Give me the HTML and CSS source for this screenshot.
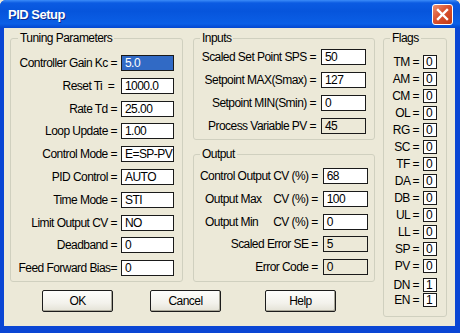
FILE: index.html
```html
<!DOCTYPE html>
<html>
<head>
    <title>PID Setup</title>
    <link rel="stylesheet" href="styles.css">
</head>
<body>
    <div class="window">
        <div class="title-bar">
            <span class="title">PID Setup</span>
            <span class="close-button">
                <svg width="13" height="13" viewBox="0 0 13 13">
                    <path d="M2 2 L11 11 M11 2 L2 11" stroke="#fff" stroke-width="2.4" stroke-linecap="square"/>
                </svg>
            </span>
        </div>
        <div class="client">
            <fieldset class="group tuning">
                <legend>Tuning Parameters</legend>
                <div class="rows">
                    <span class="label">Controller Gain Kc =</span><span class="box selected">5.0</span>
                    <span class="label">Reset Ti  = </span><span class="box">1000.0</span>
                    <span class="label">Rate Td =</span><span class="box">25.00</span>
                    <span class="label">Loop Update =</span><span class="box">1.00</span>
                    <span class="label">Control Mode =</span><span class="box">E=SP-PV</span>
                    <span class="label">PID Control =</span><span class="box">AUTO</span>
                    <span class="label">Time Mode =</span><span class="box">STI</span>
                    <span class="label">Limit Output CV =</span><span class="box">NO</span>
                    <span class="label">Deadband =</span><span class="box">0</span>
                    <span class="label">Feed Forward Bias=</span><span class="box">0</span>
                </div>
            </fieldset>

            <div class="middle">
                <fieldset class="group inputs">
                    <legend>Inputs</legend>
                    <div class="rows">
                        <span class="label">Scaled Set Point SPS =</span><span class="box">50</span>
                        <span class="label">Setpoint MAX(Smax) =</span><span class="box">127</span>
                        <span class="label">Setpoint MIN(Smin) =</span><span class="box">0</span>
                        <span class="label">Process Variable PV =</span><span class="box readonly">45</span>
                    </div>
                </fieldset>
                <fieldset class="group output">
                    <legend>Output</legend>
                    <div class="rows">
                        <span class="label">Control Output CV (%) =</span><span class="box">68</span>
                        <span class="label split"><span>Output Max</span><span>CV (%) =</span></span><span class="box">100</span>
                        <span class="label split"><span>Output Min</span><span>CV (%) =</span></span><span class="box">0</span>
                        <span class="label">Scaled Error SE =</span><span class="box readonly">5</span>
                        <span class="label">Error Code =</span><span class="box readonly">0</span>
                    </div>
                </fieldset>
            </div>

            <fieldset class="group flags">
                <legend>Flags</legend>
                <div class="rows">
                    <span class="label">TM =</span><span class="flag">0</span>
                    <span class="label">AM =</span><span class="flag">0</span>
                    <span class="label">CM =</span><span class="flag">0</span>
                    <span class="label">OL =</span><span class="flag">0</span>
                    <span class="label">RG =</span><span class="flag">0</span>
                    <span class="label">SC =</span><span class="flag">0</span>
                    <span class="label">TF =</span><span class="flag">0</span>
                    <span class="label">DA =</span><span class="flag">0</span>
                    <span class="label">DB =</span><span class="flag">0</span>
                    <span class="label">UL =</span><span class="flag">0</span>
                    <span class="label">LL =</span><span class="flag">0</span>
                    <span class="label">SP =</span><span class="flag">0</span>
                    <span class="label">PV =</span><span class="flag">0</span>
                    <span class="label done">DN =</span><span class="flag done">1</span>
                    <span class="label">EN =</span><span class="flag">1</span>
                </div>
            </fieldset>

            <div class="buttons">
                <span class="button ok">OK</span>
                <span class="button cancel">Cancel</span>
                <span class="button help">Help</span>
            </div>
        </div>
    </div>
</body>
</html>
```

FILE: styles.css
```css
body {
    margin: 0;
    padding: 0;
    background: #ECE9D8;
    font-family: "Liberation Sans", Arial, sans-serif;
    font-size: 12px;
    letter-spacing: -0.55px;
    color: #000;
}
.window {
    width: 460px;
    height: 333px;
    display: flex;
    flex-direction: column;
    background: #0A46D4;
    border-radius: 6px 6px 0 0;
    overflow: hidden;
}
.title-bar {
    height: 28px;
    flex: none;
    display: flex;
    align-items: center;
    justify-content: space-between;
    padding: 0 8px 0 8px;
    background: linear-gradient(#3B8CF8 0, #0B5BE2 3px, #0655DC 40%, #0B5FE6 85%, #0447CF 100%);
}
.title {
    color: #fff;
    font-weight: bold;
    font-size: 13px;
    letter-spacing: -0.5px;
    text-shadow: 1px 1px #0A2A8F;
    margin-top: 1px;
}
.close-button {
    width: 19px;
    height: 19px;
    border: 1px solid #fff;
    border-radius: 3px;
    display: flex;
    align-items: center;
    justify-content: center;
    background: linear-gradient(135deg, #EE9272 0, #DA5230 45%, #C23A15 100%);
    margin-right: -1px;
}
.client {
    flex: 1;
    margin: 0 5px 7px 4px;
    background: #ECE9D8;
    display: grid;
    grid-template-columns: 173px 10px 182px 8px 64px;
    grid-template-rows: 250px 27px;
    row-gap: 8px;
    padding: 4px 0 0 6px;
    align-items: start;
}
.group {
    margin: 0;
    border: 1px solid #D0D0BF;
    border-radius: 3px;
    box-sizing: border-box;
    min-width: 0;
}
.group legend {
    padding: 0 2px;
    margin: 0;
    line-height: 13px;
}
.rows {
    display: grid;
    align-items: center;
}
.label {
    white-space: pre;
    text-align: right;
}
.split {
    display: flex;
    justify-content: space-between;
    padding-left: 5px;
}
.box {
    height: 16px;
    box-sizing: border-box;
    border: 1px solid #1A1A1A;
    background: #fff;
    padding-left: 3px;
    line-height: 14px;
    overflow: hidden;
}
.box.selected {
    background: #316AC5;
    color: #fff;
}
.box.readonly {
    background: #ECE9D8;
}
.tuning {
    grid-column: 1;
    height: 250px;
    padding: 10px 8px 0 7px;
}
.tuning .rows {
    grid-template-columns: 1fr 53px;
    column-gap: 4px;
    grid-auto-rows: 16px;
    row-gap: 6.8px;
}
.middle {
    grid-column: 3;
    display: flex;
    flex-direction: column;
    gap: 8px;
}
.inputs {
    height: 108px;
    padding: 4px 8px 0 6px;
}
.inputs .rows,
.output .rows {
    grid-template-columns: 1fr 45px;
    column-gap: 5px;
    grid-auto-rows: 16px;
}
.inputs .rows {
    row-gap: 7px;
}
.output {
    height: 134px;
    padding: 7px 8px 0 6px;
}
.output .rows {
    row-gap: 6.8px;
}
.flags {
    grid-row: 1 / 3;
    grid-column: 5;
    height: 285px;
    padding: 10px 9px 0 6px;
}
.flags .rows {
    grid-template-columns: 1fr 14px;
    column-gap: 4px;
    grid-auto-rows: 14px;
    row-gap: 3px;
}
.flag {
    height: 14px;
    box-sizing: border-box;
    border: 1px solid #1A1A1A;
    background: #fff;
    padding-left: 2px;
    line-height: 12px;
}
.flag.done,
.label.done {
    margin-top: 4px;
}
.buttons {
    grid-column: 1 / 4;
    grid-row: 2;
    display: flex;
}
.button {
    width: 71px;
    height: 22px;
    box-sizing: border-box;
    border: 1px solid #1C1C1C;
    border-radius: 2px;
    background: linear-gradient(#FDFDFB 0, #F3F2EC 60%, #E4E2D6 100%);
    box-shadow: inset -1px -1px #A9A799;
    display: flex;
    align-items: center;
    justify-content: center;
}
.ok {
    margin-left: 32px;
}
.cancel {
    margin-left: 37px;
}
.help {
    margin-left: 44px;
}
```
